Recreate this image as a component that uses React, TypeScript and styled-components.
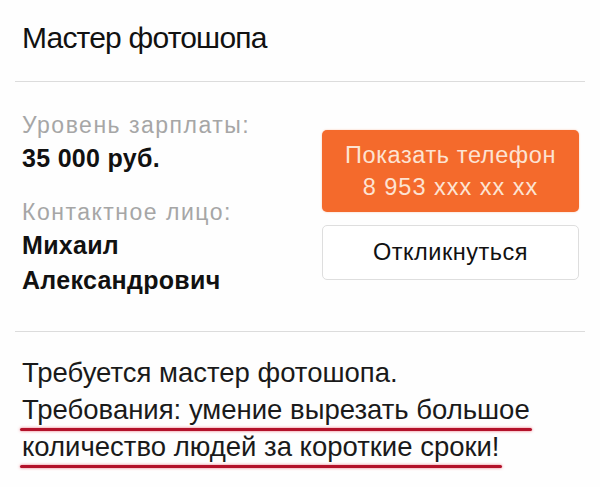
import React from "react";
import styled, { createGlobalStyle } from "styled-components";

const GlobalStyle = createGlobalStyle`
  html, body {
    margin: 0;
    padding: 0;
    background: #fefefe;
  }
  body {
    font-family: "Liberation Sans", Arial, Helvetica, sans-serif;
    color: #151515;
  }
`;

const Page = styled.div`
  width: 600px;
  height: 487px;
  overflow: hidden;
  background: #fefefe;
`;

const Header = styled.header`
  padding: 20px 22px 0;
  height: 81px;
  box-sizing: border-box;
`;

const Title = styled.h1`
  margin: 0;
  font-size: 30px;
  line-height: 36px;
  font-weight: 400;
  letter-spacing: -0.8px;
  color: #111;
`;

const Divider = styled.hr`
  margin: 0 15px;
  border: none;
  height: 1px;
  background: #dcdcdc;
`;

const Info = styled.section`
  display: flex;
  justify-content: space-between;
  padding: 30px 21px 0 22px;
  height: 249px;
  box-sizing: border-box;
`;

const Details = styled.div`
  display: flex;
  flex-direction: column;
`;

const Label = styled.div<{ $gap?: number }>`
  font-size: 23px;
  line-height: 26px;
  letter-spacing: 1.5px;
  color: #a6a6a6;
  margin-top: ${(p) => p.$gap ?? 0}px;
`;

const Value = styled.div`
  font-size: 25px;
  line-height: 35px;
  font-weight: 700;
  letter-spacing: 0.3px;
  color: #111;
  margin-top: 3px;
`;

const Actions = styled.div`
  display: flex;
  flex-direction: column;
  gap: 13px;
  width: 257px;
  margin-top: 18px;
`;

const PrimaryButton = styled.button`
  height: 82px;
  border: none;
  border-radius: 5px;
  background: #f46a2c;
  color: #fde3d2;
  font-family: inherit;
  font-size: 23.5px;
  line-height: 32px;
  letter-spacing: 0.6px;
  display: flex;
  flex-direction: column;
  align-items: center;
  justify-content: center;
  padding: 0;
  box-shadow: 0 0 2px rgba(244, 106, 44, 0.4);
`;

const Phone = styled.span`
  letter-spacing: 1px;
`;

const SecondaryButton = styled.button`
  height: 55px;
  border: 1px solid #dedede;
  border-radius: 5px;
  background: #fff;
  color: #111;
  font-family: inherit;
  font-size: 23.5px;
  letter-spacing: 0.5px;
  padding: 0;
`;

const Description = styled.section`
  padding: 22px 22px 0;
  font-size: 27.5px;
  line-height: 37px;
  color: #1a1a1a;
`;

const Line = styled.div``;

const Marked = styled.span`
  position: relative;
  display: inline-block;

  &::after {
    content: "";
    position: absolute;
    left: -2px;
    right: -2px;
    bottom: -3px;
    height: 3px;
    border-radius: 2px;
    background: #b3122a;
    box-shadow: 0 0 3px rgba(225, 50, 70, 0.7);
  }
`;

export default function App() {
  return (
    <Page>
      <GlobalStyle />
      <Header>
        <Title>Мастер фотошопа</Title>
      </Header>
      <Divider />
      <Info>
        <Details>
          <Label>Уровень зарплаты:</Label>
          <Value>35 000 руб.</Value>
          <Label $gap={23}>Контактное лицо:</Label>
          <Value>
            Михаил
            <br />
            Александрович
          </Value>
        </Details>
        <Actions>
          <PrimaryButton>
            <span>Показать телефон</span>
            <Phone>8 953 xxx xx xx</Phone>
          </PrimaryButton>
          <SecondaryButton>Откликнуться</SecondaryButton>
        </Actions>
      </Info>
      <Divider />
      <Description>
        <Line>Требуется мастер фотошопа.</Line>
        <Line>
          <Marked>Требования: умение вырезать большое</Marked>
        </Line>
        <Line>
          <Marked>количество людей за короткие сроки!</Marked>
        </Line>
      </Description>
    </Page>
  );
}
